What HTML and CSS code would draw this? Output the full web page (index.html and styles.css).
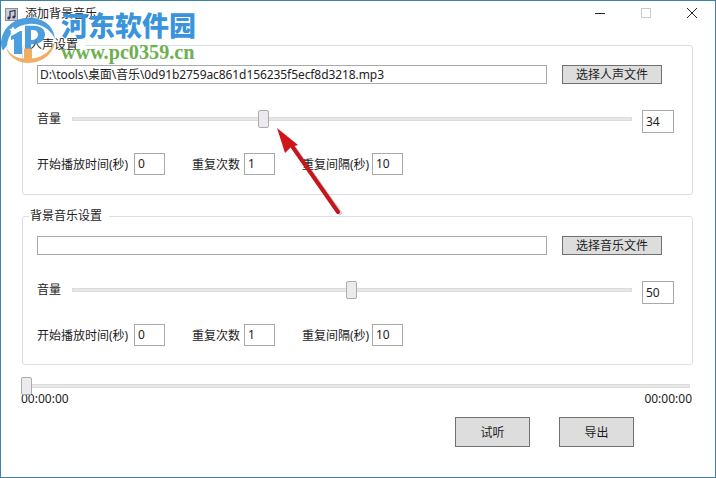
FILE: index.html
```html
<!DOCTYPE html>
<html lang="zh">
<head>
<meta charset="utf-8">
<title>添加背景音乐</title>
<link rel="stylesheet" href="styles.css">
</head>
<body>
<div class="window">
  <header class="titlebar">
    <svg class="app-icon" width="13" height="13" viewBox="0 0 13 13"><rect x=".5" y=".5" width="12" height="12" fill="#c9ccd6" stroke="#8a8f99"/><path d="M5 10V3.500l5-1V9" fill="none" stroke="#2a3350" stroke-width="1.200"/><circle cx="3.800" cy="10" r="1.500" fill="#2a3350"/><circle cx="8.800" cy="9" r="1.500" fill="#2a3350"/></svg>
    <span class="title">添加背景音乐</span>
    <div class="controls">
      <svg width="10" height="10" viewBox="0 0 10 10"><path d="M0 5.500h10" stroke="#222" stroke-width="1"/></svg>
      <svg width="10" height="10" viewBox="0 0 10 10"><rect x=".5" y=".5" width="9" height="9" fill="none" stroke="#ccc"/></svg>
      <svg width="10" height="10" viewBox="0 0 10 10"><path d="M0 0l10 10M10 0L0 10" stroke="#222" stroke-width="1"/></svg>
    </div>
  </header>

  <fieldset class="group">
    <legend>人声设置</legend>
    <div class="row file-row">
      <div class="box file-box">D:\tools\桌面\音乐\0d91b2759ac861d156235f5ecf8d3218.mp3</div>
      <button class="btn file-btn">选择人声文件</button>
    </div>
    <div class="row slider-row">
      <span class="vol-label">音量</span>
      <div class="slider vol-slider"><span class="thumb" style="left:185px"></span></div>
      <div class="box num-box">34</div>
    </div>
    <div class="row time-row">
      <span class="lbl start-lbl">开始播放时间(秒)</span><div class="box small">0</div>
      <span class="lbl count-lbl">重复次数</span><div class="box small">1</div>
      <span class="lbl gap-lbl">重复间隔(秒)</span><div class="box small">10</div>
    </div>
  </fieldset>

  <fieldset class="group second">
    <legend>背景音乐设置</legend>
    <div class="row file-row">
      <div class="box file-box"></div>
      <button class="btn file-btn">选择音乐文件</button>
    </div>
    <div class="row slider-row">
      <span class="vol-label">音量</span>
      <div class="slider vol-slider"><span class="thumb" style="left:273px"></span></div>
      <div class="box num-box">50</div>
    </div>
    <div class="row time-row">
      <span class="lbl start-lbl">开始播放时间(秒)</span><div class="box small">0</div>
      <span class="lbl count-lbl">重复次数</span><div class="box small">1</div>
      <span class="lbl gap-lbl">重复间隔(秒)</span><div class="box small">10</div>
    </div>
  </fieldset>

  <div class="progress">
    <div class="slider main-slider"><span class="thumb" style="left:-1px"></span></div>
    <div class="times"><span>00:00:00</span><span>00:00:00</span></div>
  </div>

  <div class="actions">
    <button class="btn big">试听</button>
    <button class="btn big">导出</button>
  </div>
</div>

<div class="watermark">
  <svg class="wm-logo" width="56" height="48" viewBox="0 0 56 54" preserveAspectRatio="none">
    <path d="M1 33C1 16 13 3 29 3c14 0 25 9 26 24C50 15 40 9 29 10 16 11 8 21 7 34L3 40C2 38 1 36 1 33z" fill="#3a94dc"/>
    <path d="M11 24l9-6h2v26h-8V27l-3 1z" fill="#3a94dc"/>
    <path d="M25 12h9c7 0 11 4 11 10s-5 11-12 11h-2v8h-6z" fill="#3a94dc"/>
    <path d="M31 17h2c3 0 5 2 5 5s-2 6-5 6h-2z" fill="#fff"/>
    <path d="M6 36c4 9 11 13 18 13V38h8v11c11-1 19-9 23-20-1 14-12 25-27 25C17 54 8 46 6 36z" fill="#f0a653"/>
    <path d="M24 38h8v14h-8z" fill="#f0a653"/>
    <path d="M13 13l1.500 2.500 2.500.5-2 2 .5 3-2.500-1.500L10.500 21l.5-3-2-2 2.500-.5z" fill="#fff"/>
  </svg>
  <div class="wm-text">
    <div class="wm-cn">河东软件园</div>
    <div class="wm-url">www.pc0359.cn</div>
  </div>
</div>

<svg class="arrow" width="80" height="100" viewBox="0 0 80 100">
  <path d="M24 28L70 93" stroke="#000" stroke-opacity=".18" stroke-width="4.500" stroke-linecap="round" fill="none"/>
  <path d="M22 26L68 92" stroke="#c4161c" stroke-width="4" stroke-linecap="round" fill="none"/>
  <path d="M7 8L28 25 21 27 15 33z" fill="#d0141c"/>
</svg>
</body>
</html>
```
FILE: styles.css
```css
* { box-sizing: border-box; }
html, body { margin: 0; padding: 0; }
body {
  width: 716px;
  height: 478px;
  overflow: hidden;
  background: #fff;
  font-family: "Noto Sans", "Noto Sans CJK SC", sans-serif;
  font-size: 12px;
  color: #1c1c1c;
}
.window {
  width: 716px;
  height: 478px;
  border: 1px solid #3b83a6;
  background: #fff;
  padding: 0 22px 0 21px;
  display: flex;
  flex-direction: column;
}
.titlebar {
  height: 36px;
  flex: none;
  margin: 0 -22px 0 -21px;
  padding: 6px 0 0 4px;
  display: flex;
  align-items: flex-start;
  font-size: 12px;
}
.title { margin-left: 7px; line-height: 14px; color: #222; }
.app-icon { margin-top: 1px; }
.controls {
  margin-left: auto;
  display: flex;
  gap: 36px;
  padding: 1px 18px 0 0;
}
.group {
  margin: 0;
  padding: 0 18px 0 14px;
  border: 1px solid #dadfe3;
  border-radius: 3px;
  height: 158px;
  flex: none;
  min-width: 0;
}
.group.second { margin-top: 13px; height: 157px; }
.group legend {
  padding: 0 7px 0 1px;
  margin-left: -8px;
  font-size: 12px;
  line-height: 16px;
  color: #222;
}
.row { display: flex; align-items: center; }
.box {
  border: 1px solid #a9a9a9;
  background: #fff;
  padding: 0 3px;
  font-size: 12px;
  color: #222;
  white-space: nowrap;
}
.file-row { margin-top: 12px; height: 19px; }
.file-box { width: 510px; height: 19px; line-height: 17px; padding-left: 2px; letter-spacing: -.08px; }
.btn {
  font: inherit;
  background: #dddddd;
  border: 1px solid #707070;
  color: #1c1c1c;
  padding: 0;
}
.file-btn { width: 100px; height: 19px; margin-left: 15px; line-height: 15px; }
.slider-row { margin-top: 25px; height: 24px; }
.vol-label { width: 35px; flex: none; margin-top: -7px; }
.slider { position: relative; height: 4px; background: #e7e7e7; border: 1px solid #dcdcdc; }
.thumb {
  position: absolute;
  top: -8px;
  width: 11px;
  height: 18px;
  background: #eceaee;
  border: 1px solid #acacac;
  border-radius: 2px;
}
.vol-slider { width: 560px; margin-top: -5px; }
.num-box { width: 32px; height: 23px; line-height: 21px; margin-left: 10px; }
.time-row { margin-top: 20px; height: 22px; }
.lbl { flex: none; }
.start-lbl { width: 97px; }
.count-lbl { width: 52px; margin-left: 27px; }
.gap-lbl { width: 70px; margin-left: 27px; }
.small { width: 31px; height: 22px; line-height: 20px; }
.progress { margin-top: 19px; margin-left: -1px; flex: none; }
.main-slider { width: 669px; }
.times {
  display: flex;
  justify-content: space-between;
  margin-top: 4px;
  width: 671px;
  line-height: 14px;
  font-size: 12px;
}
.actions {
  margin-top: 11px;
  display: flex;
  gap: 29px;
  padding-left: 433px;
}
.big { width: 75px; height: 30px; font-size: 12px; flex: none; }
.watermark {
  position: absolute;
  left: 0;
  top: 10px;
  display: flex;
  gap: 5px;
}
.wm-logo { margin-top: 5px; opacity: .9; }
.wm-text { display: flex; flex-direction: column; }
.wm-cn {
  font-family: "Noto Sans CJK SC", sans-serif;
  font-weight: 900;
  font-size: 27px;
  line-height: 30px;
  color: #3a94dc;
}
.wm-url {
  font-family: "Liberation Serif", serif;
  font-weight: 700;
  font-size: 20.200px;
  line-height: 20px;
  margin-top: 2px;
  color: #6cb04f;
}
.arrow { position: absolute; left: 270px; top: 120px; }
```
